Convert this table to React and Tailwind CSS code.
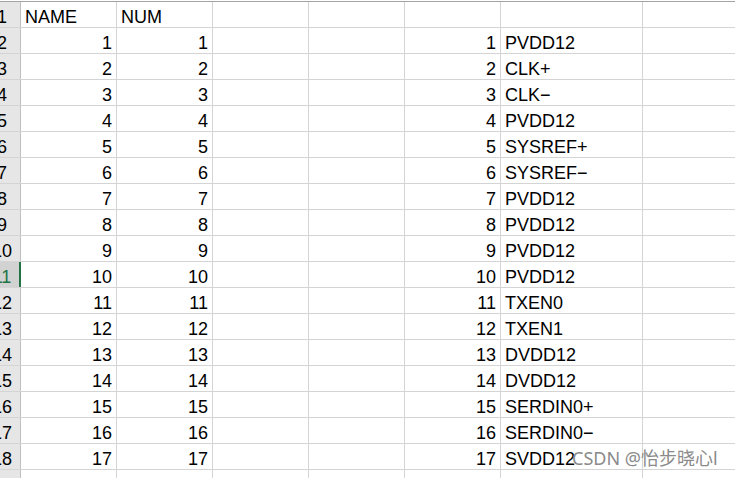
import React from 'react';

const labels = [
  'PVDD12', 'CLK+', 'CLK\u2212', 'PVDD12', 'SYSREF+', 'SYSREF\u2212', 'PVDD12', 'PVDD12', 'PVDD12',
  'PVDD12', 'TXEN0', 'TXEN1', 'DVDD12', 'DVDD12', 'SERDIN0+', 'SERDIN0\u2212', 'SVDD12', 'SERDIN1+',
];

const rows = [
  { a: 'NAME', b: 'NUM', e: '', f: '', head: true },
  ...labels.map((f, i) => ({ a: String(i + 1), b: String(i + 1), e: String(i + 1), f })),
];

function Cell({ children, right, w }) {
  return (
    <div
      className={`${w} shrink-0 h-full border-r border-[#d4d4d4] flex items-end pb-px overflow-hidden whitespace-nowrap ${
        right ? 'justify-end pr-[4px]' : 'justify-start pl-[4px]'
      }`}
    >
      <span className="leading-[18px]">{children}</span>
    </div>
  );
}

export default function App() {
  return (
    <div
      className="relative w-[735px] h-[478px] overflow-hidden bg-white text-black text-[18px]"
      style={{ fontFamily: '"Liberation Sans", Arial, sans-serif' }}
    >
      <div className="h-px bg-white" />
      <div className="h-px bg-[#a3a3a3]" />
      {rows.map((r, i) => {
        const n = i + 1;
        const selected = n === 11;
        return (
          <div key={n} className="flex h-[26px] border-b border-[#d4d4d4]">
            <div
              className={`w-[21px] shrink-0 h-full overflow-hidden flex items-end pb-px ${
                selected
                  ? 'bg-[#d2d2d2] text-[#217346] border-r-2 border-[#217346]'
                  : 'bg-[#e6e6e6] border-r border-[#bfbfbf]'
              }`}
            >
              <span className="block w-[36px] -ml-[16px] shrink-0 text-center leading-[18px]">{n}</span>
            </div>
            <Cell w="w-[96px]" right={!r.head}>{r.a}</Cell>
            <Cell w="w-[96px]" right={!r.head}>{r.b}</Cell>
            <Cell w="w-[96px]" />
            <Cell w="w-[96px]" />
            <Cell w="w-[96px]" right>{r.e}</Cell>
            <Cell w="w-[142px]">{r.f}</Cell>
            <div className="flex-1 h-full" />
          </div>
        );
      })}
      <div
        className="absolute left-[572px] top-[445px] text-[18px] leading-[26px] text-[#8a8a8a] whitespace-nowrap"
        style={{ fontFamily: '"Noto Sans", "Noto Sans CJK SC", sans-serif' }}
      >
        CSDN @怡步晓心l
      </div>
    </div>
  );
}
